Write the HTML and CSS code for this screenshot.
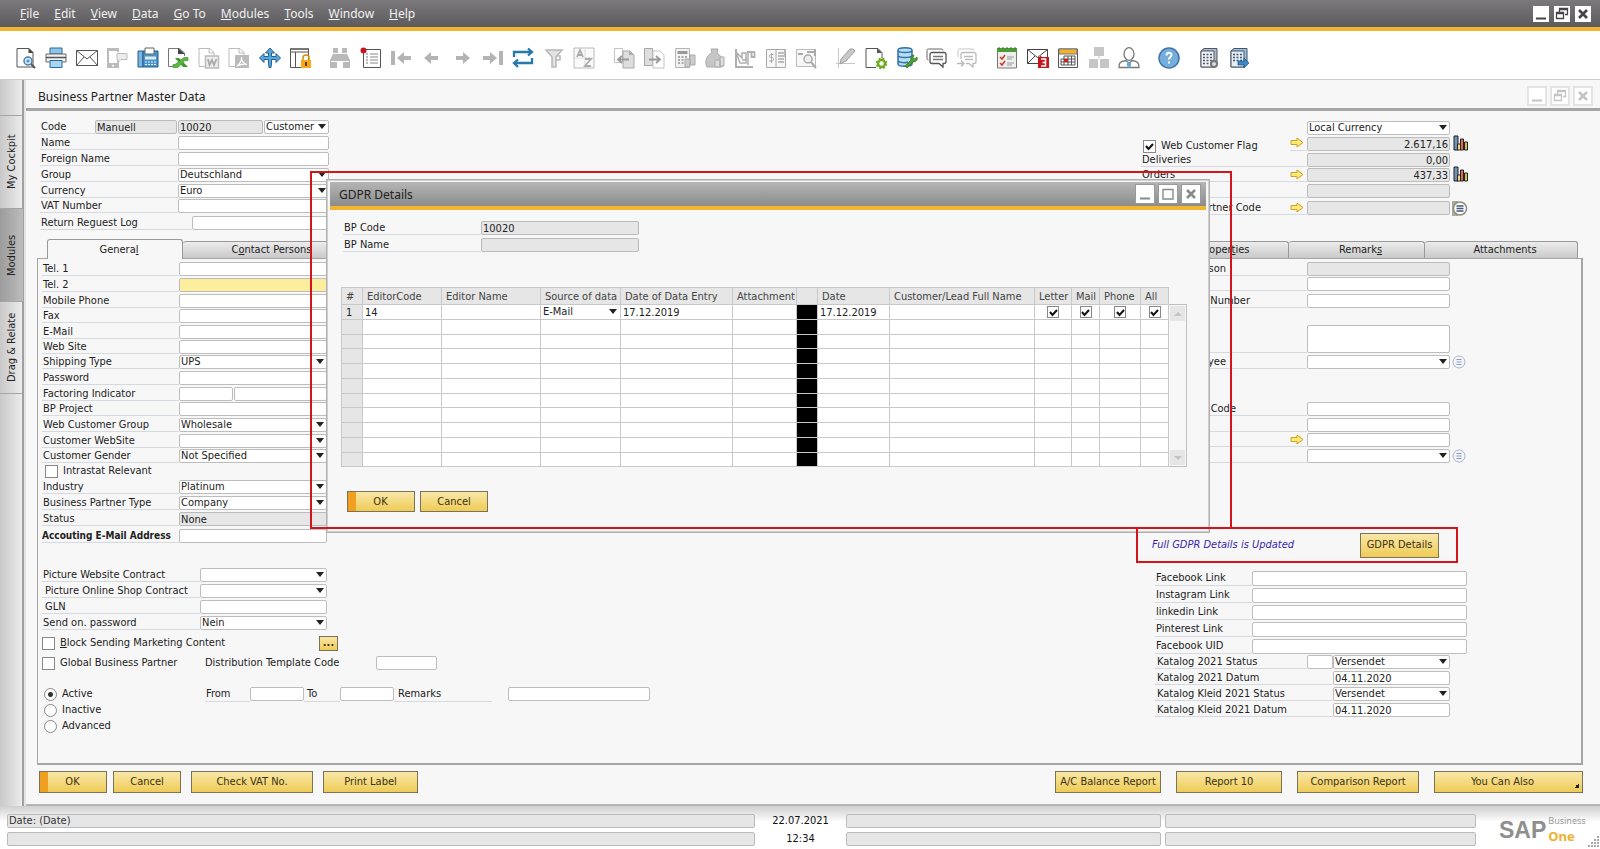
FILE: index.html
```html
<!DOCTYPE html>
<html lang="en">
<head>
<meta charset="utf-8">
<title>SAP Business One</title>
<link rel="stylesheet" href="styles.css">
</head>
<body>
<svg width="0" height="0" class="defs" aria-hidden="true">
  <symbol id="min" viewBox="0 0 16 16"><path d="M3 12.500h10" stroke="currentColor" stroke-width="2"/></symbol>
  <symbol id="restore" viewBox="0 0 16 16"><path d="M5.500 6V2.500h8v6H11M2.500 6.500h7v6h-7zM2.500 7.500h7M5.500 3.500h8" fill="none" stroke="currentColor" stroke-width="1.300"/></symbol>
  <symbol id="max" viewBox="0 0 16 16"><path d="M3 3.500h10v9.500H3z" fill="none" stroke="currentColor" stroke-width="1.400"/></symbol>
  <symbol id="close" viewBox="0 0 16 16"><path d="M4 4l8 8M12 4l-8 8" stroke="currentColor" stroke-width="2.600"/></symbol>
  <symbol id="link" viewBox="0 0 14 11"><path d="M1 3.500h6V1l6 4.500L7 10V7.500H1z" fill="#ffe873" stroke="#c9a227"/></symbol>
  <symbol id="chart" viewBox="0 0 16 16"><path d="M1 1h4v14H1z" fill="#6f94b8" stroke="#222"/><path d="M4.500 9h3v6h-3z" fill="#f0dc7a" stroke="#222"/><path d="M7.500 4h3v11h-3z" fill="#e0685c" stroke="#222"/><path d="M11.500 7h3v8h-3z" fill="#c8c850" stroke="#222"/></symbol>
  <symbol id="list" viewBox="0 0 14 14"><circle cx="7" cy="7" r="6" fill="#f4f6fb" stroke="#a9b3cc"/><path d="M4.500 4.500h5M4.500 7h5M4.500 9.500h5" stroke="#8c98b8"/></symbol>
  <symbol id="listdark" viewBox="0 0 16 15"><path d="M0 0h6v3H3v9h3v3H0z" fill="#a9a99a"/><circle cx="8" cy="7.500" r="6.500" fill="#fff" stroke="#8f8f80" stroke-width="1.500"/><path d="M4.500 5h7M4.500 7.500h7M4.500 10h7" stroke="#445577" stroke-width="1.500"/></symbol>
</svg>

<header class="menubar">
  <nav class="menus">
    <a href="#"><u>F</u>ile</a><a href="#"><u>E</u>dit</a><a href="#"><u>V</u>iew</a><a href="#"><u>D</u>ata</a><a href="#"><u>G</u>o To</a><a href="#"><u>M</u>odules</a><a href="#"><u>T</u>ools</a><a href="#"><u>W</u>indow</a><a href="#"><u>H</u>elp</a>
  </nav>
  <div class="winbtns dark">
    <button aria-label="Minimize"><svg><use href="#min"/></svg></button>
    <button aria-label="Restore"><svg><use href="#restore"/></svg></button>
    <button aria-label="Close"><svg><use href="#close"/></svg></button>
  </div>
</header>

<div class="toolbar">
  <div class="tools t10">
    <button aria-label="Preview"><svg viewBox="0 0 22 22"><path d="M2 1.500h12l4 4v14.500H2z" fill="#fff" stroke="#555"/><path d="M13.500 1v5h5z" fill="#444"/><circle cx="13" cy="14" r="4" fill="#cfe6f7" stroke="#4a7ca6" stroke-width="1.500"/><circle cx="13" cy="14" r="1.500" fill="#4a90c8"/><path d="M16 17l4 4" stroke="#555" stroke-width="2"/></svg></button>
    <button aria-label="Print"><svg viewBox="0 0 22 22"><path d="M5 1h12v6H5z" fill="#8fc4ea" stroke="#2a6a9c"/><path d="M1 7h20v8H1z" fill="#f3f3f3" stroke="#666"/><path d="M1 10.500h20" stroke="#555" stroke-width="1.500"/><path d="M5 13.500h12v7H5z" fill="#a9d4f2" stroke="#2a6a9c"/></svg></button>
    <button aria-label="Email"><svg viewBox="0 0 22 22"><path d="M.500 3.500h21v15H.500zM.500 3.500L11 12l10.500-8.500M.500 18.500L8 10M21.500 18.500L14 10" fill="#fff" fill-opacity=".5" stroke="#555"/></svg></button>
    <button aria-label="SMS"><svg viewBox="0 0 22 22"><path d="M1 1h12v4h-2V4H3v12h8v-3h2v8H1z" fill="#bbb"/><path d="M6 18h2v1.500H6z" fill="#fff"/><path d="M11 6.500h10v6h-6l-3 3v-3h-1z" fill="#ececec" stroke="#bbb"/></svg></button>
    <button aria-label="Fax"><svg viewBox="0 0 22 22"><path d="M1 4h5v16H1z" fill="#7db5dd" stroke="#1f5d8e"/><path d="M6 4h15v16H6z" fill="#4c93c6" stroke="#1f5d8e"/><path d="M8 1h9v6H8z" fill="#fff" stroke="#666"/><path d="M8 9.500h11v3H8z" fill="#d9ecf9"/><path d="M8 15h11M8 17.500h11" stroke="#d9ecf9" stroke-dasharray="2 1"/></svg></button>
    <button aria-label="Export to Excel"><svg viewBox="0 0 22 22"><path d="M6 19.500H1.500v-18h11l5 4.500v3" fill="none" stroke="#777"/><path d="M11 1l7 6h-7z" fill="#444"/><path d="M8 11h4l9 9h-5z" fill="#3f9a2d"/><path d="M21 10.500h-4l-9 7H6v3h5l7-7h3z" fill="#5cb83f" stroke="#3a8a28" stroke-width=".6"/></svg></button>
    <button aria-label="Export to Word"><svg viewBox="0 0 22 22"><path d="M7 19.500H1v-18h11l4 4v3" fill="none" stroke="#bbb"/><path d="M11 1v5h5" fill="none" stroke="#bbb"/><path d="M7.500 9h13v12h-13z" fill="#eee" stroke="#bbb" stroke-width="1.500"/><path d="M10 12l1.500 6 2.500-5 2 5 2.500-6" fill="none" stroke="#aaa" stroke-width="1.800"/></svg></button>
    <button aria-label="Export to PDF"><svg viewBox="0 0 22 22"><path d="M7 19.500H1v-18h11l4 4v3" fill="none" stroke="#bbb"/><path d="M11 1v5h5" fill="none" stroke="#bbb"/><path d="M7 8h14v13H7z" fill="#bbb"/><path d="M9 19c3-2 5-6 4.500-8.500 0 4 2 6 5.500 7-3-1-7 0-10 1.500" fill="none" stroke="#fff" stroke-width="1.300"/></svg></button>
    <button aria-label="Launch application"><svg viewBox="0 0 22 22"><path d="M11 1l4.500 5h-3v3.500H17v-3l4.500 4.500L17 15.500v-3h-4.500V16L12 20.500h-2L9.500 16v-3.500H5v3L.500 11 5 6.500v3h4.500V6h-3z" fill="#5aa6d8" stroke="#1f6395"/></svg></button>
    <button aria-label="Lock screen"><svg viewBox="0 0 22 22"><path d="M1.500 1.500h18v19h-18zM1.500 5h18M6.500 5v15" fill="none" stroke="#555"/><path d="M2 2h17" stroke="#777" stroke-width="2"/><path d="M14 13v-2a3 3 0 016 0v2" fill="none" stroke="#d98c00" stroke-width="1.500"/><path d="M12 13h10v8H12z" fill="#f6a81c"/><path d="M17 15v4" stroke="#663c00" stroke-width="2"/></svg></button>
  </div>
  <div class="tools t9">
    <button aria-label="Find"><svg viewBox="0 0 22 22"><path d="M4 1h5v6h4V1h5v6l3 6v8h-7v-7h-6v7H1v-8l3-6z" fill="#b9b9b9"/><path d="M2 14.500h6M14 14.500h6M4 6.500h5M13 6.500h5" stroke="#fff"/></svg></button>
    <button aria-label="Add"><svg viewBox="0 0 22 22"><path d="M3.500 2.500h17v18h-17z" fill="#fff" stroke="#555"/><path d="M10 7h8M10 10h8M10 13h8M10 16h8" stroke="#888"/><path d="M6 7h2M6 10h2M6 13h2M6 16h2" stroke="#777"/><circle cx="3.500" cy="3.500" r="3" fill="#c4161c"/></svg></button>
    <button aria-label="First record"><svg viewBox="0 0 22 22"><path d="M1 4h4v14H1zM7 11l7-6v4h7v4h-7v4z" fill="#b4b4b4"/></svg></button>
    <button aria-label="Previous record"><svg viewBox="0 0 22 22"><path d="M3 11l7-6v4h7v4h-7v4z" fill="#b4b4b4"/></svg></button>
    <button aria-label="Next record"><svg viewBox="0 0 22 22"><path d="M19 11l-7-6v4H5v4h7v4z" fill="#b4b4b4"/></svg></button>
    <button aria-label="Last record"><svg viewBox="0 0 22 22"><path d="M17 4h4v14h-4zM15 11L8 5v4H1v4h7v4z" fill="#b4b4b4"/></svg></button>
    <button aria-label="Refresh"><svg viewBox="0 0 22 22"><path d="M2 10V5h17M16 1.500L20 5l-4 3.500M20 11v5H3M6 12.500L2 16l4 4" fill="none" stroke="#2779ab" stroke-width="2.300"/></svg></button>
    <button aria-label="Filter"><svg viewBox="0 0 22 22"><path d="M3 3h16l-6 7v10H9V10z" fill="#e2e2e2" stroke="#b8b8b8" stroke-width="1.500"/><path d="M13 9h4v4h-4" fill="none" stroke="#b8b8b8" stroke-width="1.500"/></svg></button>
    <button aria-label="Sort"><svg viewBox="0 0 22 22"><path d="M1 1h20v20H1z" fill="#fafafa" stroke="#bbb"/><path d="M12 2v18M2 11h18" stroke="#ddd"/><path d="M4 10l3-7 3 7M5 8h4M12 12h6l-6 7h6" fill="none" stroke="#aaa" stroke-width="1.800"/></svg></button>
  </div>
  <div class="tools t7">
    <button aria-label="Base document"><svg viewBox="0 0 22 22"><path d="M1.500 1.500h8v14h-8z" fill="#fff" stroke="#c4c4c4"/><path d="M10 4h7l4 4v13H10z" fill="#dedede" stroke="#a8a8a8"/><path d="M16 4v4h5" fill="#aaa"/><path d="M16 12.500H6M9 9l-4 3.500L9 16" fill="none" stroke="#999" stroke-width="1.800"/></svg></button>
    <button aria-label="Target document"><svg viewBox="0 0 22 22"><path d="M1.500 1.500h8v17h-8z" fill="#dedede" stroke="#a8a8a8"/><path d="M10 4h7l4 4v13H10z" fill="#fff" stroke="#c4c4c4"/><path d="M6 12.500h10M13 9l4 3.500-4 3.500" fill="none" stroke="#999" stroke-width="1.800"/></svg></button>
    <button aria-label="Gross profit"><svg viewBox="0 0 22 22"><path d="M1.500 1.500h14v19h-14z" fill="#f2f2f2" stroke="#b4b4b4"/><path d="M3.500 4h10v3h-10z" fill="#999"/><path d="M4 10h9M4 13h9M4 16h9" stroke="#aaa" stroke-width="1.800" stroke-dasharray="2 1.500"/><path d="M11 12h5v8h-5zM16 8h5v10h-5z" fill="#ccc" stroke="#aaa"/></svg></button>
    <button aria-label="Payment means"><svg viewBox="0 0 22 22"><path d="M7 2h7l-1 4c5 3 6 8 5 14H3C0 14 3 8 8 6z" fill="#c6c6c6" stroke="#aaa"/><path d="M11 13h5v7h-5zM16 10h4v9h-4z" fill="#ddd" stroke="#aaa"/></svg></button>
    <button aria-label="Volume and weight"><svg viewBox="0 0 22 22"><path d="M2 2v18l17 0" fill="none" stroke="#b0b0b0" stroke-width="2"/><path d="M2 5l6 6V6h4v10h-6zM14 4v14M8 13h5" fill="none" stroke="#b0b0b0" stroke-width="1.500"/><path d="M13 5h8M17.500 5v5h3V5" fill="none" stroke="#b0b0b0" stroke-width="1.800"/></svg></button>
    <button aria-label="Transaction journal"><svg viewBox="0 0 22 22"><path d="M1.500 2.500h19v18h-19zM11 2v18" fill="#f7f7f7" stroke="#aaa"/><path d="M13 6h6M13 9h6M13 12h6M13 15h6M20 2v8" stroke="#aaa" stroke-width="1.500"/><path d="M8.500 7.500H6c-2 0-2 3 0 3h1c2 0 2 3.500 0 3.500H4M6.500 6v10" fill="none" stroke="#aaa"/></svg></button>
    <button aria-label="Journal preview"><svg viewBox="0 0 22 22"><path d="M1.500 2.500h19v17h-19z" fill="#f7f7f7" stroke="#bbb"/><path d="M3 7h5M12 5h7M20 2v7" stroke="#aaa" stroke-width="2"/><circle cx="13" cy="12" r="4" fill="#eee" stroke="#aaa" stroke-width="1.500"/><path d="M16 15l5 6" stroke="#aaa" stroke-width="2"/></svg></button>
  </div>
  <div class="tools t5">
    <button aria-label="Layout designer"><svg viewBox="0 0 22 22"><path d="M3.500 1v20M1 16.500h19" stroke="#c8c8c8"/><path d="M6 12L15 2q3-1 5 2l-9 10-6 3z" fill="#c8c8c8" stroke="#a0a0a0"/></svg></button>
    <button aria-label="New activity"><svg viewBox="0 0 22 22"><path d="M11 20.500H1v-19h12l4 4v6" fill="#fff" stroke="#555"/><path d="M12 1v5h5z" fill="#555"/><circle cx="16.500" cy="16.500" r="3.500" fill="none" stroke="#6cab1c" stroke-width="2.500"/><circle cx="16.500" cy="16.500" r="5" fill="none" stroke="#6cab1c" stroke-width="1.500" stroke-dasharray="2 2"/></svg></button>
    <button aria-label="Query manager"><svg viewBox="0 0 22 22"><path d="M2 3c0-3 14-3 14 0v14c0 3-14 3-14 0z" fill="#b9dcf3" stroke="#2a72a8" stroke-width="1.500"/><path d="M2 4c2 2 12 2 14 0M2 9c2 2 12 2 14 0M2 14c2 2 8 2 10 1" fill="none" stroke="#2a72a8" stroke-width="1.500"/><path d="M9 19l6-6c-1-3 1-5 3-5l-1 3 2 1 2-2c1 3-1 5-4 5l-6 6z" fill="#4f9e33" stroke="#2f7418" stroke-width=".7"/></svg></button>
    <button aria-label="Messages"><svg viewBox="0 0 22 22"><path d="M2.500 13a1.500 1.500 0 01-1.500-1.500v-8A1.500 1.500 0 012.500 2h13A1.500 1.500 0 0117 3.500" fill="none" stroke="#666"/><path d="M6 5.500h12a2 2 0 012 2v7a2 2 0 01-2 2h-1v3.500l-4-3.500H6a2 2 0 01-2-2v-7a2 2 0 012-2z" fill="#fff" stroke="#555" stroke-width="1.300"/><path d="M7 9.500h10M7 12.500h10" stroke="#777" stroke-width="1.500"/></svg></button>
    <button aria-label="Forward message"><svg viewBox="0 0 22 22"><path d="M2 10V3.500A1.500 1.500 0 013.500 2h13A1.500 1.500 0 0118 3.500" fill="none" stroke="#c4c4c4"/><path d="M5 12V7.500a2 2 0 012-2h11a2 2 0 012 2v7a2 2 0 01-2 2h-1v3.500l-4-3.500h-3" fill="none" stroke="#bbb" stroke-width="1.300"/><path d="M8 9.500h9M9 12.500h8M1 16.500h7M5 13.500l3 3-3 3" fill="none" stroke="#bbb" stroke-width="1.500"/></svg></button>
  </div>
  <div class="tools t5b">
    <button aria-label="My activities"><svg viewBox="0 0 22 22"><path d="M1.500 3h19v18h-19z" fill="#eee" stroke="#777"/><path d="M1 1h20v4H1z" fill="#4c9a3a"/><path d="M2 1h18" stroke="#2f7a20" stroke-dasharray="2 2"/><path d="M4 10l2 2 3-4M4 16l2 2 3-4" fill="none" stroke="#d0352b" stroke-width="1.500"/><path d="M11 10h7M11 12h5M11 16h7M11 18h5" stroke="#999"/></svg></button>
    <button aria-label="Inbox"><svg viewBox="0 0 22 22"><path d="M.500 2.500h20v14H.500zM.500 2.500l10 8 10-8M.500 16.500L8 9M13 9l4 3" fill="none" stroke="#444"/><path d="M11 10h11v11H11z" fill="#c4161c"/><path d="M14 12h4.500v7H14M15.500 15.500h3" fill="none" stroke="#fff" stroke-width="1.500"/></svg></button>
    <button aria-label="Calendar"><svg viewBox="0 0 22 22"><path d="M1.500 2h19v18.500h-19z" fill="#fff" stroke="#555"/><path d="M2 2h18v5H2z" fill="#f0b32d" stroke="#777"/><path d="M7 9h11v9H4v-6h14M4 15h14M7 9v9M11 9v9M14.500 9v9" fill="none" stroke="#555"/><path d="M7 12h4v3H7z" fill="#d0211c"/></svg></button>
    <button aria-label="Org chart"><svg viewBox="0 0 22 22"><path d="M6 0h10v9H6zM1 12h9v9H1zM12 12h9v9h-9z" fill="#c6c6c6"/><path d="M11 9v3" stroke="#c6c6c6"/></svg></button>
    <button aria-label="User"><svg viewBox="0 0 22 22"><ellipse cx="11" cy="7" rx="5" ry="6.300" fill="#fff" stroke="#777" stroke-width="1.300"/><path d="M1 20.500c0-5 1-6 7-7l3 3 3-3c6 1 7 2 7 7z" fill="#fff" stroke="#777" stroke-width="1.300"/><path d="M9 14l2 2 2-2v5l-2 2-2-2z" fill="#6aaad8"/></svg></button>
  </div>
  <div class="tools t1">
    <button aria-label="Help"><svg viewBox="0 0 22 22"><circle cx="11" cy="11" r="10" fill="#76aedb" stroke="#3d76a8" stroke-width="1.500"/><path d="M8.500 8.500c0-3.500 5-3.500 5-.5 0 2-2.500 2-2.500 4.500M11 14.500v2" fill="none" stroke="#fff" stroke-width="2"/></svg></button>
  </div>
  <div class="tools t2">
    <button aria-label="Server settings"><svg viewBox="0 0 22 22"><path d="M3 4l3-2.500h13V17l-3 3H3z" fill="#a9bac8" stroke="#556"/><path d="M3 4h13v16H3z" fill="#eef3f7" stroke="#556"/><path d="M5 7.500h9M5 10.500h9M5 13.500h9M5 16.500h9" stroke="#556" stroke-width="1.500" stroke-dasharray="2 1.500"/><circle cx="16" cy="17" r="3" fill="#ddd" stroke="#777" stroke-width="2"/></svg></button>
    <button aria-label="Server transfer"><svg viewBox="0 0 22 22"><path d="M3 4l3-2.500h13V17l-3 3H3z" fill="#9fc0dc" stroke="#456"/><path d="M3 4h13v16H3z" fill="#e2eef8" stroke="#456"/><path d="M5 7.500h9M5 10.500h9M5 13.500h9" stroke="#456" stroke-width="1.500" stroke-dasharray="2 1.500"/><path d="M10 14h6v-3l5 5-5 5v-3h-6z" fill="#3e86c6" stroke="#1c5288" stroke-width=".7"/></svg></button>
  </div>
</div>

<div class="middle">
  <nav class="rail">
    <button class="rail-tab">My Cockpit</button>
    <button class="rail-tab on">Modules</button>
    <button class="rail-tab">Drag &amp; Relate</button>
  </nav>

  <main class="window">
    <div class="titlebar">
      <h1>Business Partner Master Data</h1>
      <div class="winbtns pale">
        <button aria-label="Minimize window"><svg><use href="#min"/></svg></button>
        <button aria-label="Restore window"><svg><use href="#restore"/></svg></button>
        <button aria-label="Close window"><svg><use href="#close"/></svg></button>
      </div>
    </div>

    <div class="head">
      <div class="head-left">
        <div class="row"><label class="lbl short" for="code">Code</label><input class="ro series" id="series" aria-label="Series" value="Manuell" readonly><input class="ro codeno" id="code" value="10020" readonly><select class="ctype" aria-label="Type"><option>Customer</option></select></div>
        <div class="row"><label class="lbl" for="name">Name</label><input class="fill" id="name"></div>
        <div class="row"><label class="lbl" for="fname">Foreign Name</label><input class="fill" id="fname"></div>
        <div class="row"><label class="lbl" for="group">Group</label><select class="fill" id="group"><option>Deutschland</option></select></div>
        <div class="row tight"><label class="lbl" for="cur">Currency</label><select class="fill" id="cur"><option>Euro</option></select></div>
        <div class="row"><label class="lbl" for="vat">VAT Number</label><input class="fill" id="vat"></div>
        <div class="row log"><label class="lbl" for="log">Return Reguest Log</label><input class="fill" id="log"></div>
      </div>
      <div class="head-right">
        <div class="row"><span class="side"></span><select class="rf" aria-label="Currency display"><option>Local Currency</option></select></div>
        <div class="row"><label class="check flag"><input type="checkbox" checked>Web Customer Flag</label><span class="arrowcell"><svg class="arrow"><use href="#link"/></svg></span><input class="ro num rf" aria-label="Account balance" value="2.617,16" readonly><svg class="chart"><use href="#chart"/></svg></div>
        <div class="row tight"><label class="lbl side" for="deliv">Deliveries</label><input class="ro num rf" id="deliv" value="0,00" readonly></div>
        <div class="row"><label class="lbl side" for="orders">Orders<svg class="arrow"><use href="#link"/></svg></label><input class="ro num rf" id="orders" value="437,33" readonly><svg class="chart"><use href="#chart"/></svg></div>
        <div class="row wide"><label class="lbl side" for="opp"></label><input class="ro rf" id="opp" readonly></div>
        <div class="row"><label class="lbl side" for="pcode"><span class="end w120">Business Partner Code</span><svg class="arrow"><use href="#link"/></svg></label><input class="ro rf" id="pcode" readonly><svg class="listico big"><use href="#listdark"/></svg></div>
      </div>
    </div>

    <div class="tabs" role="tablist">
      <button class="tab on" role="tab">Genera<u>l</u></button>
      <button class="tab big" role="tab">C<u>o</u>ntact Persons</button>
      <button class="tab grow" role="tab">Addresses</button>
      <button class="tab grow" role="tab">Payment Terms</button>
      <button class="tab grow" role="tab">Payment Run</button>
      <button class="tab grow" role="tab">Accounting</button>
      <button class="tab" role="tab">Proper<u>t</u>ies</button>
      <button class="tab" role="tab">Remark<u>s</u></button>
      <button class="tab last" role="tab">Attachments</button>
    </div>

    <section class="panel">
      <div class="col-left">
        <div class="fields">
          <div class="row"><label class="lbl" for="t1">Tel. 1</label><input class="fill" id="t1"></div>
          <div class="row"><label class="lbl" for="t2">Tel. 2</label><input class="fill hot" id="t2"></div>
          <div class="row tight"><label class="lbl" for="mob">Mobile Phone</label><input class="fill" id="mob"></div>
          <div class="row"><label class="lbl" for="fax">Fax</label><input class="fill" id="fax"></div>
          <div class="row tight"><label class="lbl" for="mail">E-Mail</label><input class="fill" id="mail"></div>
          <div class="row tight"><label class="lbl" for="web">Web Site</label><input class="fill" id="web"></div>
          <div class="row"><label class="lbl" for="ship">Shipping Type</label><select class="fill" id="ship"><option>UPS</option></select></div>
          <div class="row"><label class="lbl" for="pw">Password</label><input class="fill" id="pw"></div>
          <div class="row tight"><label class="lbl" for="fact">Factoring Indicator</label><input class="fact" id="fact"><input class="fill" aria-label="Factoring name"></div>
          <div class="row"><label class="lbl" for="proj">BP Project</label><input class="fill" id="proj"></div>
          <div class="row"><label class="lbl" for="wcg">Web Customer Group</label><select class="fill" id="wcg"><option>Wholesale</option></select></div>
          <div class="row tight"><label class="lbl" for="cws">Customer WebSite</label><select class="fill" id="cws"><option></option></select></div>
          <div class="row tight"><label class="lbl" for="gen">Customer Gender</label><select class="fill" id="gen"><option>Not Specified</option></select></div>
          <div class="row"><label class="check"><input type="checkbox">Intrastat Relevant</label></div>
          <div class="row"><label class="lbl" for="ind">Industry</label><select class="fill" id="ind"><option>Platinum</option></select></div>
          <div class="row"><label class="lbl" for="bpt">Business Partner Type</label><select class="fill" id="bpt"><option>Company</option></select></div>
          <div class="row wide"><label class="lbl" for="stat">Status</label><input class="ro fill" id="stat" value="None" readonly></div>
          <div class="row"><label class="lbl strong" for="acc">Accouting E-Mail Address</label><input class="fill" id="acc"></div>
        </div>
        <div class="fields pictures">
          <div class="row"><label class="lbl" for="pwc">Picture Website Contract</label><select class="fill" id="pwc"><option></option></select></div>
          <div class="row"><label class="lbl ind" for="posc">Picture Online Shop Contract</label><select class="fill" id="posc"><option></option></select></div>
          <div class="row"><label class="lbl ind" for="gln">GLN</label><input class="fill" id="gln"></div>
          <div class="row"><label class="lbl" for="sop">Send on. password</label><select class="fill" id="sop"><option>Nein</option></select></div>
        </div>
        <div class="line block"><label class="check"><input type="checkbox"><span><u>B</u>lock Sending Marketing Content</span></label><button class="btn dots" aria-label="More">...</button></div>
        <div class="line"><label class="check c2"><input type="checkbox">Global Business Partner</label><label class="dtc" for="dtc">Distribution Template Code</label><input class="w61" id="dtc"></div>
        <div class="line active">
          <label class="check c2 radio"><input type="radio" name="state" checked>Active</label>
          <label class="lbl from" for="from">From</label><input class="w54" id="from">
          <label class="lbl to" for="to">To</label><input class="w54" id="to">
          <label class="lbl rem" for="rem">Remarks</label><input class="w142" id="rem">
        </div>
        <div class="row"><label class="check radio"><input type="radio" name="state">Inactive</label></div>
        <div class="row"><label class="check radio"><input type="radio" name="state">Advanced</label></div>
      </div>

      <div class="col-right">
        <div class="rfields">
          <div class="row tight"><label class="lbl side" for="cp"><span class="end w86">Contact Person</span></label><input class="ro rf" id="cp" readonly></div>
          <div class="row wide"><label class="lbl side" for="id2"></label><input class="rf" id="id2"></div>
          <div class="row"><label class="lbl side" for="idn"><span class="end w110">ID Number</span></label><input class="rf" id="idn"></div>
          <div class="row area"><label class="lbl side" for="note"></label><textarea class="rf" id="note"></textarea></div>
          <div class="row"><label class="lbl side" for="emp"><span class="end w86">Sales Employee</span></label><select class="rf" id="emp"><option></option></select><svg class="listico"><use href="#list"/></svg></div>
          <div class="row channel"><label class="lbl side" for="chc"><span class="end w96">BP Code</span></label><input class="rf" id="chc"></div>
          <div class="row tight"><label class="lbl side" for="ch2"></label><input class="rf" id="ch2"></div>
          <div class="row"><label class="lbl side" for="ch3"><svg class="arrow"><use href="#link"/></svg></label><input class="rf" id="ch3"></div>
          <div class="row"><label class="lbl side" for="ch4"></label><select class="rf" id="ch4"><option></option></select><svg class="listico"><use href="#list"/></svg></div>
        </div>
        <div class="gdpr"><em>Full GDPR Details is Updated</em><button class="btn">GDPR Details</button></div>
        <div class="links">
          <div class="row tall"><label class="lbl" for="fb">Facebook Link</label><input id="fb"></div>
          <div class="row tall"><label class="lbl" for="ig">Instagram Link</label><input id="ig"></div>
          <div class="row tall"><label class="lbl" for="li">linkedin Link</label><input id="li"></div>
          <div class="row tall"><label class="lbl" for="pi">Pinterest Link</label><input id="pi"></div>
          <div class="row tall tight"><label class="lbl" for="uid">Facebook UID</label><input id="uid"></div>
        </div>
        <div class="katalog">
          <div class="row"><label class="lbl" for="k1">Katalog 2021 Status</label><input class="mini" aria-label="Katalog code"><select id="k1"><option>Versendet</option></select></div>
          <div class="row"><label class="lbl long" for="k2">Katalog 2021 Datum</label><input id="k2" value="04.11.2020"></div>
          <div class="row"><label class="lbl long" for="k3">Katalog Kleid 2021 Status</label><select id="k3"><option>Versendet</option></select></div>
          <div class="row"><label class="lbl long" for="k4">Katalog Kleid 2021 Datum</label><input id="k4" value="04.11.2020"></div>
        </div>
      </div>
    </section>

    <footer class="actions">
      <button class="btn primary w68">OK</button>
      <button class="btn w68">Cancel</button>
      <button class="btn w122 gapped">Check VAT No.</button>
      <button class="btn w95 gapped">Print Label</button>
      <div class="right-actions">
        <button class="btn w106">A/C Balance Report</button>
        <button class="btn w106">Report 10</button>
        <button class="btn w122">Comparison Report</button>
        <button class="btn w149 also">You Can Also</button>
      </div>
    </footer>
  </main>
</div>

<footer class="status">
  <div class="cells">
    <output>Date: (Date)</output><time>22.07.2021</time><output></output><output></output>
    <output></output><time>12:34</time><output></output><output></output>
  </div>
  <div class="logo"><b>SAP</b><span class="logo-r"><span>Business</span><strong>One</strong></span></div>
  <svg class="grip" viewBox="0 0 12 12"><path d="M10 0h2v2h-2zM7 3h2v2H7zM10 3h2v2h-2zM4 6h2v2H4zM7 6h2v2H7zM10 6h2v2h-2zM1 9h2v2H1zM4 9h2v2H4zM7 9h2v2H7zM10 9h2v2h-2z" fill="#aaa"/></svg>
</footer>

<section class="dialog" role="dialog" aria-label="GDPR Details">
  <div class="dlg-title">
    <h2>GDPR Details</h2>
    <div class="winbtns grey">
      <button aria-label="Minimize dialog"><svg><use href="#min"/></svg></button>
      <button aria-label="Maximize dialog"><svg><use href="#max"/></svg></button>
      <button aria-label="Close dialog"><svg><use href="#close"/></svg></button>
    </div>
  </div>
  <div class="dlg-body">
    <div class="row bp"><label class="lbl" for="bpc">BP Code</label><input class="ro" id="bpc" value="10020" readonly></div>
    <div class="row bp"><label class="lbl" for="bpn">BP Name</label><input class="ro" id="bpn" readonly></div>
    <div class="gridwrap">
      <table>
        <colgroup><col class="g21"><col class="g79"><col class="g99"><col class="g80"><col class="g112"><col class="g64"><col class="g21"><col class="g72"><col><col class="g37"><col class="g28"><col class="g41"><col class="g28"></colgroup>
        <thead><tr><th>#</th><th>EditorCode</th><th>Editor Name</th><th>Source of data</th><th>Date of Data Entry</th><th>Attachment</th><th></th><th>Date</th><th>Customer/Lead Full Name</th><th>Letter</th><th>Mail</th><th>Phone</th><th>All</th></tr></thead>
        <tbody>
          <tr><td>1</td><td>14</td><td></td><td><select aria-label="Source of data"><option>E-Mail</option></select></td><td>17.12.2019</td><td></td><td></td><td>17.12.2019</td><td></td><td class="ck"><input type="checkbox" aria-label="Letter" checked></td><td class="ck"><input type="checkbox" aria-label="Mail" checked></td><td class="ck"><input type="checkbox" aria-label="Phone" checked></td><td class="ck"><input type="checkbox" aria-label="All" checked></td></tr>
          <tr><td></td><td></td><td></td><td></td><td></td><td></td><td></td><td></td><td></td><td></td><td></td><td></td><td></td></tr>
          <tr><td></td><td></td><td></td><td></td><td></td><td></td><td></td><td></td><td></td><td></td><td></td><td></td><td></td></tr>
          <tr><td></td><td></td><td></td><td></td><td></td><td></td><td></td><td></td><td></td><td></td><td></td><td></td><td></td></tr>
          <tr><td></td><td></td><td></td><td></td><td></td><td></td><td></td><td></td><td></td><td></td><td></td><td></td><td></td></tr>
          <tr><td></td><td></td><td></td><td></td><td></td><td></td><td></td><td></td><td></td><td></td><td></td><td></td><td></td></tr>
          <tr><td></td><td></td><td></td><td></td><td></td><td></td><td></td><td></td><td></td><td></td><td></td><td></td><td></td></tr>
          <tr><td></td><td></td><td></td><td></td><td></td><td></td><td></td><td></td><td></td><td></td><td></td><td></td><td></td></tr>
          <tr><td></td><td></td><td></td><td></td><td></td><td></td><td></td><td></td><td></td><td></td><td></td><td></td><td></td></tr>
          <tr><td></td><td></td><td></td><td></td><td></td><td></td><td></td><td></td><td></td><td></td><td></td><td></td><td></td></tr>
          <tr><td></td><td></td><td></td><td></td><td></td><td></td><td></td><td></td><td></td><td></td><td></td><td></td><td></td></tr>
        </tbody>
      </table>
      <div class="scroll"><button aria-label="Scroll up"><svg viewBox="0 0 10 6"><path d="M1 5l4-4 4 4z"/></svg></button><button aria-label="Scroll down"><svg viewBox="0 0 10 6"><path d="M1 1l4 4 4-4z"/></svg></button></div>
    </div>
    <div class="dlg-actions"><button class="btn primary w68">OK</button><button class="btn w68">Cancel</button></div>
  </div>
</section>
<div class="marker"></div>
</body>
</html>
```
FILE: styles.css
```css
* { box-sizing: border-box; }
html, body { height: 100%; }
body {
  margin: 0;
  display: flex;
  flex-direction: column;
  position: relative;
  min-height: 100vh;
  background: #fff;
  color: #222;
  font: 11px/14px "DejaVu Sans Condensed", "DejaVu Sans", Tahoma, sans-serif;
}
button, input, select, textarea { font: inherit; color: inherit; margin: 0; padding: 0; border-radius: 0; }
.defs { position: absolute; }
h1, h2 { margin: 0; font: 12px/18px "Noto Sans", "Open Sans", sans-serif; }

/* menu bar */
.menubar {
  display: flex;
  justify-content: space-between;
  align-items: center;
  height: 31px;
  padding: 0 9px 0 20px;
  background: linear-gradient(#7b797b, #5d5a5d);
  border-bottom: 4px solid #f2b52d;
  flex: none;
}
.menus { display: flex; gap: 15px; font: 12px/18px "Noto Sans", "Open Sans", sans-serif; }
.menus a { color: #f2f2f2; text-decoration: none; }
u { text-underline-offset: 1px; }
.winbtns { display: flex; gap: 3px; }
.winbtns button { width: 20px; height: 20px; background: #fff; border: 1px solid #ddd; display: grid; place-items: center; }
.winbtns svg { width: 16px; height: 16px; }
.dark { gap: 5px; color: #444; }
.dark button { width: 16px; height: 16px; border: 0; }
.pale { color: #c4c4c4; gap: 3px; }
.pale button { border-width: 2px; border-color: #e4e4e4; }
.grey { color: #8a8a8a; }
.grey button { border-color: #999; }

/* toolbar */
.toolbar { display: flex; gap: 18px; align-items: center; height: 49px; padding: 6px 15px 0; border-bottom: 1px solid #ccc; flex: none; }
.tools { display: flex; justify-content: space-between; flex: none; }
.tools button { width: 22px; height: 22px; border: 0; background: none; }
.tools svg { display: block; width: 22px; height: 22px; }
.t10 { width: 296px; }
.t9 { width: 266px; }
.t7 { width: 204px; }
.t5 { width: 143px; }
.t5b { width: 144px; }
.t1 { width: 22px; }
.t2 { width: 52px; }

.middle { display: flex; flex: 1; }

/* vertical rail */
.rail { width: 26px; flex: none; padding-top: 35px; background: linear-gradient(90deg, #c9c9c9, #ebebeb 22px, #a0a0a0 22px, #a0a0a0 24px, #e4e4e4 24px); }
.rail-tab {
  display: block;
  width: 23px;
  height: 93px;
  border: 0;
  border-bottom: 1px solid #a5a5a5;
  background: none;
  writing-mode: vertical-rl;
  transform: rotate(180deg);
  line-height: 22px;
}
.rail-tab.on { background: linear-gradient(270deg, #9c9c9c, #bcbcbc); }
.rail-tab:last-child { border-top: 1px solid #a5a5a5; }

/* main window */
.window { flex: 1; min-width: 0; display: flex; flex-direction: column; background: #f7f7f7; border-bottom: 2px solid #b4b4b4; }
.titlebar { display: flex; justify-content: space-between; align-items: center; height: 31px; padding: 4px 7px 0 12px; border-bottom: 3px solid #a5a5a5; }
.titlebar h1 { padding-top: 2px; }

.row { display: flex; height: 14px; margin-bottom: 2px; }
.row.tight { margin-bottom: 1px; }
.row.wide { margin-bottom: 3px; }
.row.tall { height: 15px; }
.lbl { border-bottom: 1px solid #d5d9e0; padding-left: 1px; white-space: nowrap; flex: none; }
.row > .lbl { width: 138px; }
.fields .row > .lbl { width: 137px; }
input:not([type]), select, textarea {
  display: block;
  appearance: none;
  height: 14px;
  min-width: 0;
  background-color: #fff;
  border: 1px solid #bdbdbd;
  border-radius: 2px;
  padding: 0 1px;
  line-height: 12px;
  outline: 0;
}
.tall input:not([type]) { height: 15px; }
select {
  background-image: url("data:image/svg+xml,%3Csvg xmlns='http://www.w3.org/2000/svg' width='8' height='5'%3E%3Cpath d='M0 0h8L4 5z' fill='%23222'/%3E%3C/svg%3E");
  background-repeat: no-repeat;
  background-position: right 2px top 3px;
}
input.ro:not([type]) { background-color: #e6e6e6; border-color: #bbb; }
.hot:not([type]) { background-color: #fdee9e; }
.fill { flex: 1; }
.num { text-align: right; }

.head { display: flex; justify-content: space-between; min-height: 128px; padding: 9px 120px 0 14px; }
.head-left { width: 289px; }
.head-right { width: 339px; padding-top: 1px; }
.head .row > .short { width: 55px; }
.series { width: 82px; margin-right: 1px; }
.codeno { width: 85px; margin-right: 1px; }
.ctype { flex: 1; }
.log { margin-top: 3px; }
.head .log > .lbl { width: 152px; }
.row > .side, .rfields .row > .side { width: 166px; display: flex; justify-content: space-between; align-items: center; padding-right: 3px; }
.side .arrow { margin-left: auto; }
.arrow { width: 14px; height: 11px; flex: none; }
.arrowcell { width: 17px; border-bottom: 1px solid #d5d9e0; }
.rf { width: 143px; }
.chart { width: 16px; height: 16px; margin: -2px 0 0 3px; }
.listico { width: 14px; height: 14px; margin-left: 2px; }
.listico.big { width: 16px; height: 15px; }
.end { display: inline-block; text-align: right; }
.w86 { width: 84px; }
.w96 { width: 94px; }
.w110 { width: 108px; }
.w120 { width: 119px; }

.check { display: flex; align-items: center; gap: 5px; white-space: nowrap; }
.check input, .ck input { appearance: none; width: 13px; height: 13px; border: 1px solid #888; background-color: #fff; flex: none; }
.check input[type=radio] { border-radius: 50%; }
.check input[type=radio]:checked { background: radial-gradient(#333 2px, #fff 3px); }
.check input[type=checkbox]:checked, .ck input:checked {
  background: #fff url("data:image/svg+xml,%3Csvg xmlns='http://www.w3.org/2000/svg' width='11' height='11'%3E%3Cpath d='M2 5l2.500 3L9 3' fill='none' stroke='%23111' stroke-width='2'/%3E%3C/svg%3E") center no-repeat;
}
.flag { width: 149px; margin-top: 4px; padding-left: 2px; }

/* tabs */
.tabs { display: flex; align-items: flex-end; height: 19px; padding: 0 22px 0 21px; }
.tab { width: 136px; height: 17px; flex: none; border: 1px solid #999; border-bottom: 0; border-left-width: 0; border-radius: 3px 3px 0 0; background: linear-gradient(#ececec, #c9c9c9); white-space: nowrap; overflow: hidden; padding-left: 8px; }
.tab.on { height: 20px; border-left-width: 1px; background: #f7f7f7; margin-bottom: -1px; z-index: 1; }
.tab.big { width: 178px; padding-left: 0; }
.tab.grow { flex: 1; width: auto; }
.tab.last { width: 153px; }
.panel { display: flex; justify-content: space-between; flex: 1; margin: 0 17px 0 11px; padding: 3px 109px 0 4px; border: 1px solid #a5a5a5; border-bottom-width: 2px; border-right-width: 2px; }
.fields { width: 285px; }
.fact { width: 54px; margin-right: 1px; }
.lbl.strong { font-size: 10px; font-weight: bold; padding-left: 0; }
.fields .check { padding-left: 3px; }
.fields.pictures { margin: 25px 0 6px; }
.pictures .row > .lbl { width: 158px; }
.pictures .row > .ind { padding-left: 3px; }
.radio { padding-left: 2px; }
.line { display: flex; height: 14px; margin-bottom: 4px; align-items: center; }
.block { width: 296px; justify-content: space-between; margin-bottom: 6px; }
.c2 { width: 163px; }
.dtc { width: 171px; }
.w61 { width: 61px; }
.w54 { width: 54px; }
.w142 { width: 142px; }
.active { margin: 17px 0 2px; }
.from { width: 45px; }
.to { width: 36px; padding-left: 3px; }
.rem { width: 98px; padding-left: 4px; margin-right: 16px; }

.col-right { width: 336px; }
.rfields { padding-left: 5px; }
.area { height: 28px; margin-top: 17px; }
.area textarea { height: 28px; resize: none; }
.channel { margin-top: 33px; }
.gdpr { display: flex; justify-content: space-between; align-items: center; width: 322px; height: 36px; margin: 64px 0 8px; padding: 0 17px 0 14px; border: 2px solid #d2151b; position: relative; z-index: 3; }
.gdpr em { color: #3a1fb0; }
.gdpr .btn { width: 79px; height: 25px; }
.links, .katalog { padding-left: 19px; }
.links .row > .lbl { width: 97px; }
.links input:not([type]) { width: 215px; }
.katalog .row > .lbl { width: 152px; padding-left: 2px; }
.katalog .row > .long { width: 178px; }
.katalog input, .katalog select { width: 117px; }
.katalog input.mini { width: 26px; }

/* buttons */
.btn { height: 22px; border: 1px solid #7b7356; background: linear-gradient(#f8e7a8, #efcb57); white-space: nowrap; color: #3b3210; }
.primary { border-left: 0; box-shadow: inset 1px 0 #7b7356, inset 9px 0 #f0a020; }
.dots { width: 19px; height: 15px; line-height: 10px; font-weight: bold; }
.w68 { width: 68px; }
.w95 { width: 95px; }
.w106 { width: 106px; }
.w122 { width: 122px; }
.w149 { width: 149px; }
.actions { display: flex; gap: 6px; padding: 6px 17px 11px 13px; }
.gapped { margin-left: 4px; }
.right-actions { display: flex; gap: 15px; margin-left: auto; }
.also { background: linear-gradient(135deg, transparent 50%, #222 50%) right 3px bottom 4px / 5px 5px no-repeat, linear-gradient(#f8e7a8, #efcb57); padding-right: 12px; }

/* status bar */
.status { display: flex; flex: none; height: 43px; padding: 8px 0 4px 7px; background: linear-gradient(#cfcfcf, #fff 16px); position: relative; }
.cells { flex: 1; display: grid; grid-template-columns: 748fr 91px 315fr 315fr; gap: 4px 0; color: #333; }
.cells output { border: 1px solid #bbb; border-radius: 2px; background: #e6e6e6; padding: 0 1px; line-height: 12px; height: 14px; }
.cells output:nth-child(4n) { margin-left: 4px; }
.cells time { text-align: center; color: #111; }
.logo { width: 124px; padding-left: 23px; display: flex; align-items: center; gap: 2px; }
.logo b { font: bold 23px/26px "Liberation Sans", sans-serif; color: #8f8f8f; }
.logo-r { display: flex; flex-direction: column; font: 9px/13px "Noto Sans", sans-serif; color: #999; }
.logo strong { font: bold 13px/18px "Noto Sans", sans-serif; color: #efb02e; }
.grip { position: absolute; right: 1px; bottom: 1px; width: 12px; height: 12px; }

/* dialog */
.dialog { position: absolute; left: 326px; top: 179px; width: 884px; z-index: 2; border: 1px solid #b0b0b0; background: #f7f7f7; outline: 1px solid #d0d0d0; outline-offset: -2px; padding: 2px 3px; }
.dlg-title { display: flex; justify-content: space-between; align-items: center; height: 28px; padding: 0 5px 0 9px; background: linear-gradient(#b5b5b5, #8c8c8c); border-bottom: 4px solid #f2b52d; color: #222; }
.dlg-title h2 { padding-top: 2px; }
.dlg-body { padding: 11px 19px 18px 11px; }
.row.bp { margin: 0 0 3px 2px; }
.row.bp > .lbl { width: 138px; }
.bp input:not([type]) { width: 158px; }
.gridwrap { display: flex; align-items: flex-end; margin-top: 35px; }
table { flex: 1; table-layout: fixed; border-collapse: collapse; width: 100%; }
th, td { border: 1px solid #c9c9c9; padding: 0; height: 15px; line-height: 13px; font-weight: normal; text-align: left; white-space: nowrap; overflow: hidden; }
th { height: 17px; background: #e6e6e6; padding-left: 4px; color: #444; }
td { background: #fff; padding-left: 2px; }
tbody tr:nth-child(4n+3) td { height: 14px; }
td:nth-child(1) { background: #e6e6e6; padding-left: 4px; }
td:nth-child(7) { background: #000; }
td select { border: 0; width: 100%; height: 13px; padding: 0; background-position: right 3px top 3px; }
td.ck { text-align: center; padding: 0; line-height: 0; }
.ck input { width: 12px; height: 12px; vertical-align: top; }
.g21 { width: 21px; }
.g28 { width: 28px; }
.g37 { width: 37px; }
.g41 { width: 41px; }
.g64 { width: 64px; }
.g72 { width: 72px; }
.g79 { width: 79px; }
.g80 { width: 80px; }
.g99 { width: 99px; }
.g112 { width: 112px; }
.scroll { width: 18px; flex: none; align-self: stretch; margin-top: 17px; display: flex; flex-direction: column; justify-content: space-between; border: 1px solid #c0c0c0; border-left: 0; background: #f7f7f7; padding: 1px; }
.scroll button { border: 0; height: 15px; background: #e6e6e6; }
.scroll svg { width: 10px; height: 6px; fill: #c4c4c4; display: block; margin: 0 auto; }
.dlg-actions { display: flex; gap: 5px; margin: 24px 0 0 6px; }
.dlg-actions .btn { height: 21px; }
.marker { position: absolute; left: 310px; top: 171px; width: 922px; height: 358px; border: 2px solid #d2151b; z-index: 3; pointer-events: none; }
```
